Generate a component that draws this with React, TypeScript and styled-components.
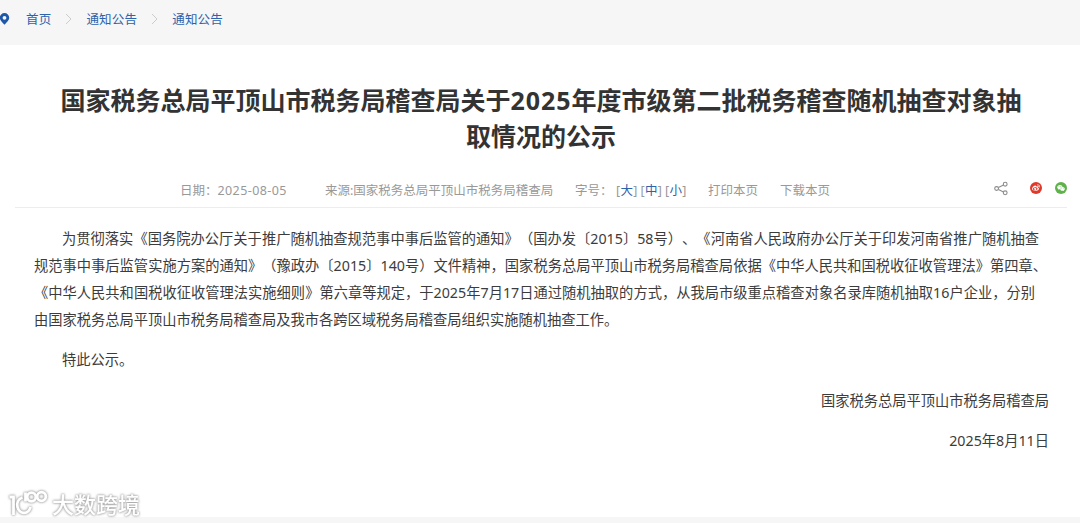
import React from 'react';
import styled, { createGlobalStyle } from 'styled-components';
import { FaWeibo, FaWeixin } from 'react-icons/fa';

const GlobalStyle = createGlobalStyle`
  * {
    box-sizing: border-box;
  }

  body {
    margin: 0;
    background: #fff;
    color: #3c3c3c;
    font-family: 'Noto Sans', 'Noto Sans CJK SC', sans-serif;
    text-spacing-trim: space-all;
    overflow: hidden;
  }
`;

const Page = styled.div`
  position: relative;
  display: flex;
  flex-direction: column;
  width: 1080px;
  height: 523px;
  overflow: hidden;
`;

const Breadcrumb = styled.nav`
  display: flex;
  align-items: center;
  height: 45px;
  padding-bottom: 7px;
  background: #f6f6f6;
`;

const Pin = styled.svg`
  width: 10px;
  height: 12px;
  margin-right: 16px;
`;

const Crumb = styled.a`
  padding-top: 1px;
  font-size: 12.5px;
  line-height: 20px;
  letter-spacing: 0.2px;
  color: #2e62ab;
  white-space: nowrap;
`;

const Chevron = styled.svg`
  width: 7px;
  height: 12px;
  margin: 0 14px;
`;

const Article = styled.main`
  flex: 1;
  display: flex;
  flex-direction: column;
  padding: 38px 13px 0 15px;
`;

const Title = styled.h1`
  margin: 0;
  color: #333;
  font-size: 25px;
  font-weight: 700;
  line-height: 35.5px;
  text-align: center;
  white-space: nowrap;
`;

const TitleNumber = styled.span`
  letter-spacing: 1px;
`;

const Meta = styled.div`
  display: flex;
  align-items: center;
  height: 36px;
  margin-top: 18px;
  padding-left: 165px;
  border-bottom: 1px solid #ededed;
  font-size: 12.5px;
  color: #999;
  white-space: nowrap;
`;

const MetaItem = styled.span<{ width: number }>`
  flex: none;
  width: ${props => props.width}px;
`;

const MetaDate = styled.span`
  letter-spacing: 0.4px;
`;

const SizeLink = styled.a`
  margin: 0 0.25px;
  color: #2e62ab;
`;

const Share = styled.div`
  display: flex;
  align-items: center;
  margin-left: auto;
  padding-bottom: 3px;
`;

const ShareIcon = styled.svg`
  width: 15px;
  height: 15px;
  margin-right: 21px;
`;

const Round = styled.span<{ color: string }>`
  display: flex;
  align-items: center;
  justify-content: center;
  width: 12px;
  height: 12px;
  border-radius: 50%;
  background: ${props => props.color};
  color: #fff;
  font-size: 8px;

  & + & {
    margin-left: 13px;
  }
`;

const Content = styled.div`
  padding: 18px 18px 0 19px;
  font-size: 14.25px;
  line-height: 26.9px;
`;

const Paragraph = styled.p<{ align?: 'right' }>`
  margin: 0 0 13.6px;
  text-align: ${props => props.align || 'left'};
`;

const Line = styled.span<{ width?: number; indent?: boolean }>`
  display: block;
  width: ${props => (props.width ? `${props.width}px` : 'auto')};
  padding-left: ${props => (props.indent ? '28px' : '0')};
  text-align-last: ${props => (props.width ? 'justify' : 'auto')};
  text-justify: inter-character;
  white-space: nowrap;
`;

const FooterBar = styled.div`
  flex: none;
  height: 6px;
  background: #f6f6f6;
`;

const Watermark = styled.div`
  position: absolute;
  left: 8px;
  bottom: 4px;
  display: flex;
  align-items: center;
  gap: 4px;
  filter: drop-shadow(0 0 1px #999) drop-shadow(0 0 1px #ccc);
`;

const WatermarkText = styled.span`
  font-size: 22px;
  font-weight: 500;
  line-height: 30px;
  color: #fff;
`;

const Separator = () => (
  <Chevron viewBox="0 0 7 12" fill="none" stroke="#ccc">
    <path d="M1 1l5 5-5 5" />
  </Chevron>
);

const sizes = ['大', '中', '小'];

const bodyLines = [
  { text: '为贯彻落实《国务院办公厅关于推广随机抽查规范事中事后监管的通知》（国办发〔2015〕58号）、《河南省人民政府办公厅关于印发河南省推广随机抽查', width: 1005, indent: true },
  { text: '规范事中事后监管实施方案的通知》（豫政办〔2015〕140号）文件精神，国家税务总局平顶山市税务局稽查局依据《中华人民共和国税收征收管理法》第四章、', width: 1013 },
  { text: '《中华人民共和国税收征收管理法实施细则》第六章等规定，于2025年7月17日通过随机抽取的方式，从我局市级重点稽查对象名录库随机抽取16户企业，分别', width: 1001 },
  { text: '由国家税务总局平顶山市税务局稽查局及我市各跨区域税务局稽查局组织实施随机抽查工作。', width: 584 },
];

export default function App() {
  return (
    <Page>
      <GlobalStyle />
      <Breadcrumb>
        <Pin viewBox="0 0 10 12">
          <path fillRule="evenodd" fill="#1f58a8" d="M4.5 0A4.7 4.7 0 0 1 9.2 4.7C9.2 7.5 6.3 9.5 4.5 11.8 2.7 9.5-.2 7.5-.2 4.7A4.7 4.7 0 0 1 4.5 0Zm0 2.9a1.9 1.9 0 1 0 0 3.8 1.9 1.9 0 0 0 0-3.8Z" />
        </Pin>
        <Crumb>首页</Crumb>
        <Separator />
        <Crumb>通知公告</Crumb>
        <Separator />
        <Crumb>通知公告</Crumb>
      </Breadcrumb>

      <Article>
        <Title>
          国家税务总局平顶山市税务局稽查局关于<TitleNumber>2025</TitleNumber>年度市级第二批税务稽查随机抽查对象抽
          <br />
          取情况的公示
        </Title>

        <Meta>
          <MetaItem width={145}>日期：<MetaDate>2025-08-05</MetaDate></MetaItem>
          <MetaItem width={250}>来源:国家税务总局平顶山市税务局稽查局</MetaItem>
          <MetaItem width={41}>字号：</MetaItem>
          <MetaItem width={92}>
            {sizes.map(size => (
              <React.Fragment key={size}>
                [<SizeLink>{size}</SizeLink>]{' '}
              </React.Fragment>
            ))}
          </MetaItem>
          <MetaItem width={72}>打印本页</MetaItem>
          <MetaItem width={52}>下载本页</MetaItem>
          <Share>
            <ShareIcon viewBox="0 0 15 15" fill="none" stroke="#8c8c8c" strokeWidth="1.1">
              <circle cx="2.6" cy="7.5" r="1.9" />
              <circle cx="11.2" cy="3.2" r="1.9" />
              <circle cx="11.2" cy="11.8" r="1.9" />
              <path d="M4.4 6.6l5.1-2.5M4.4 8.4l5.1 2.5" />
            </ShareIcon>
            <Round color="#e0392b"><FaWeibo /></Round>
            <Round color="#5fb14c"><FaWeixin /></Round>
          </Share>
        </Meta>

        <Content>
          <Paragraph>
            {bodyLines.map(line => (
              <Line key={line.width} width={line.width} indent={line.indent}>{line.text}</Line>
            ))}
          </Paragraph>
          <Paragraph>
            <Line indent>特此公示。</Line>
          </Paragraph>
          <Paragraph align="right">国家税务总局平顶山市税务局稽查局</Paragraph>
          <Paragraph align="right">2025年8月11日</Paragraph>
        </Content>
      </Article>

      <FooterBar />
      <Watermark>
        <svg width="40" height="30" viewBox="0 0 40 30" fill="none" stroke="#fff" strokeWidth="2.8">
          <path d="M1.5 8h4v18M14.5 8.5C10 10 8.5 14 9.5 18c2 7.500 11 8 13 0" />
          <path d="M17.500 3.500v9" />
          <circle cx="23.500" cy="8" r="4.300" />
          <circle cx="33.500" cy="7.500" r="4.300" />
        </svg>
        <WatermarkText>大数跨境</WatermarkText>
      </Watermark>
    </Page>
  );
}
